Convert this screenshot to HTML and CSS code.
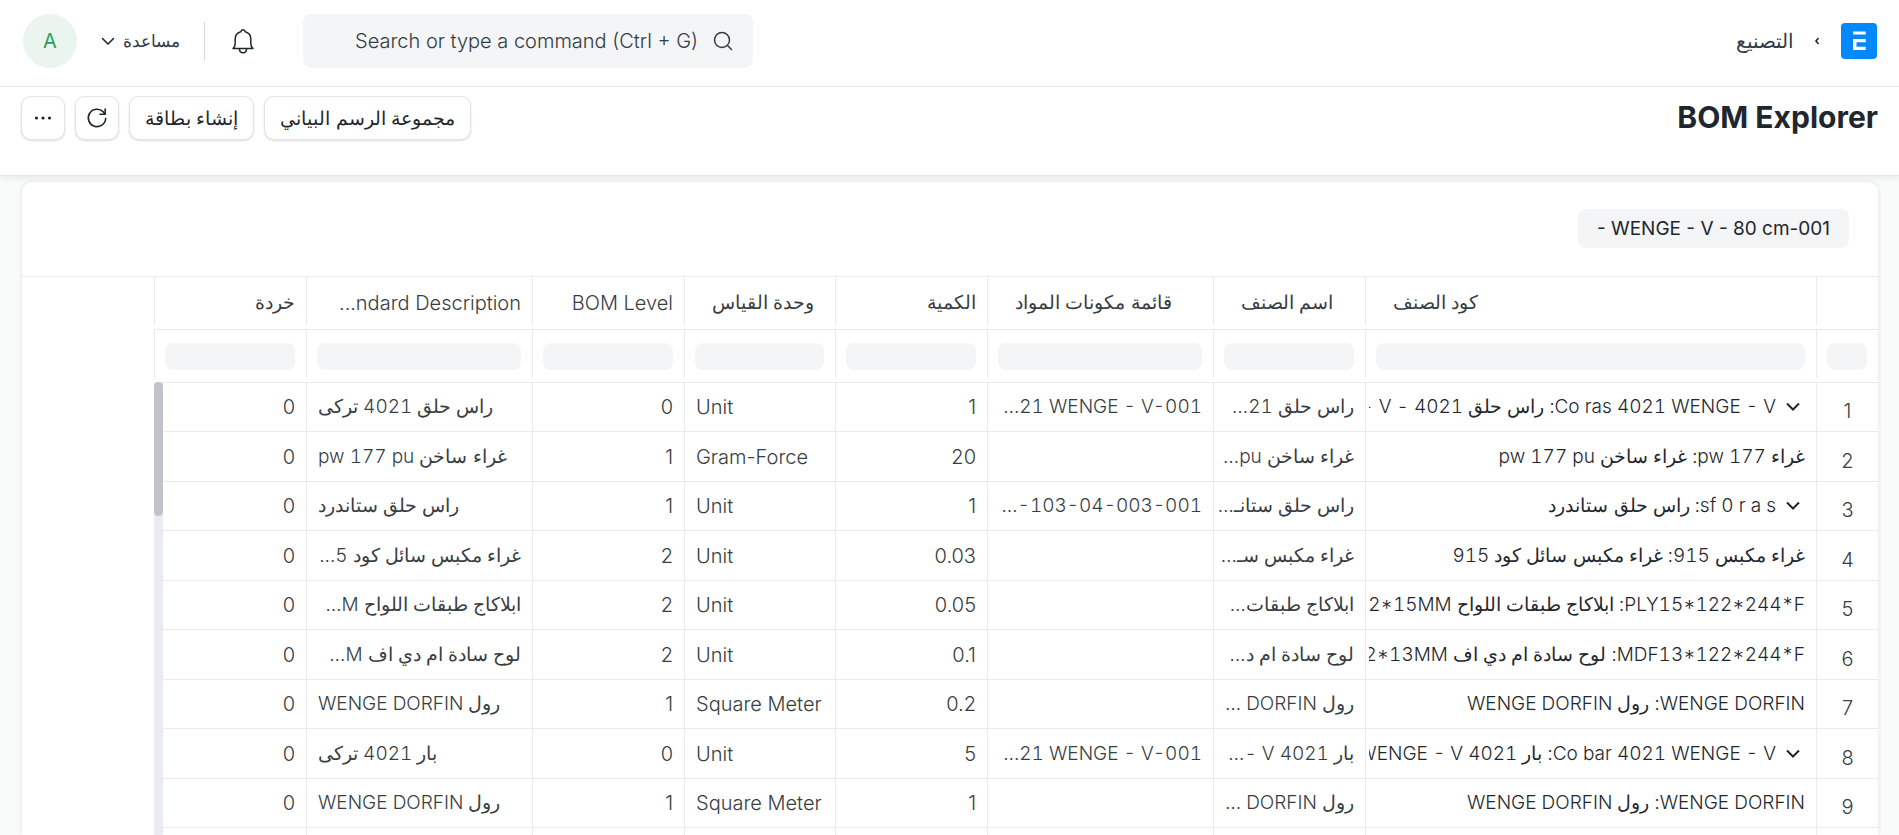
FILE: index.html
```html
<!DOCTYPE html>
<html lang="ar" dir="rtl">
    <head>
        <meta charset="UTF-8" />
        <meta name="viewport" content="width=device-width, initial-scale=1.0" />
        <title>BOM Explorer</title>
        <link rel="stylesheet" href="styles.css">
    </head>
    <body>
        <header class="navbar">
            <a class="logo" href="#" aria-label="Home">
                <svg width="36" height="36" viewBox="0 0 36 36">
                    <rect width="36" height="36" rx="4" fill="#0089ff"></rect>
                    <path d="M12 8.500h12.700v3H12zM12 16h12.700v3.200H15.500v4.600h9.200V27H12z" fill="#fff"></path>
                </svg>
            </a>
            <nav class="breadcrumb">
                <svg width="6" height="10" viewBox="0 0 6 10" fill="none" stroke="#1f272e" stroke-width="1.600">
                    <path d="M4.500 2 2 5l2.500 3"></path>
                </svg>
                <a href="#">التصنيع</a>
            </nav>
            <div class="search">
                <svg width="22" height="22" viewBox="0 0 22 22" fill="none" stroke="#333c44" stroke-width="1.500" stroke-linecap="round">
                    <circle cx="10" cy="10" r="7.500"></circle>
                    <path d="m15.500 15.500 4 4"></path>
                </svg>
                <input type="text" dir="ltr" aria-label="Search" placeholder="Search or type a command (Ctrl + G)" />
            </div>
            <button class="bell" aria-label="Notifications">
                <svg width="24" height="26" viewBox="0 0 24 26" fill="none" stroke="#1f272e" stroke-width="1.500" stroke-linejoin="round" stroke-linecap="round">
                    <path d="M2 20.500h20c-1.600-1.500-2.200-2.500-2.200-5V11c0-4-2.300-6.300-5.500-7.200C14 2.400 13.200 1.700 12 1.700s-2 .7-2.300 2.100C6.500 4.700 4.200 7 4.200 11v4.500c0 2.500-.6 3.500-2.200 5z"></path>
                    <path d="M8.500 21c0 2.200 1.400 3.700 3.500 3.700s3.500-1.500 3.500-3.700"></path>
                </svg>
            </button>
            <span class="divider"></span>
            <button class="help">
                مساعدة
                <svg width="14" height="9" viewBox="0 0 14 9" fill="none" stroke="#1f272e" stroke-width="1.600" stroke-linecap="round" stroke-linejoin="round">
                    <path d="m1.500 1.500 5.500 5.500 5.500-5.500"></path>
                </svg>
            </button>
            <button class="avatar">A</button>
        </header>

        <section class="page-head">
            <h1 dir="ltr">BOM Explorer</h1>
            <div class="actions">
                <button class="btn">مجموعة الرسم البياني</button>
                <button class="btn">إنشاء بطاقة</button>
                <button class="btn btn-icon" aria-label="Refresh">
                    <svg width="22" height="22" viewBox="0 0 22 22" fill="none" stroke="#1f272e" stroke-width="1.600" stroke-linecap="round" stroke-linejoin="round">
                        <path d="M19.700 11.500a8.700 8.700 0 1 1-2.400-6.600l1.400 2"></path>
                        <path d="M19.200 2v5.200h-5.200"></path>
                    </svg>
                </button>
                <button class="btn btn-icon" aria-label="Menu">
                    <svg width="18" height="4" viewBox="0 0 18 4" fill="#1f272e">
                        <circle cx="2.500" cy="2" r="1.600"></circle>
                        <circle cx="9" cy="2" r="1.600"></circle>
                        <circle cx="15.500" cy="2" r="1.600"></circle>
                    </svg>
                </button>
            </div>
        </section>

        <main class="report">
            <div class="filters">
                <button class="filter" dir="ltr">- WENGE - V - 80 cm-001</button>
            </div>
            <div class="datatable">
                <table>
                    <colgroup>
                        <col class="c-num" />
                        <col class="c-code" />
                        <col />
                        <col class="c-wide" />
                        <col />
                        <col class="c-uom" />
                        <col />
                        <col class="c-wide" />
                        <col />
                    </colgroup>
                    <thead>
                        <tr>
                            <th></th>
                            <th class="start">كود الصنف</th>
                            <th class="start">اسم الصنف</th>
                            <th class="start">قائمة مكونات المواد</th>
                            <th>الكمية</th>
                            <th class="start">وحدة القياس</th>
                            <th class="en">BOM Level</th>
                            <th class="en"><bdi dir="ltr">…ndard Description</bdi></th>
                            <th>خردة</th>
                        </tr>
                        <tr>
                            <td><input type="text" aria-label="#" /></td>
                            <td><input type="text" aria-label="كود الصنف" /></td>
                            <td><input type="text" aria-label="اسم الصنف" /></td>
                            <td><input type="text" aria-label="قائمة مكونات المواد" /></td>
                            <td><input type="text" aria-label="الكمية" /></td>
                            <td><input type="text" aria-label="وحدة القياس" /></td>
                            <td><input type="text" aria-label="BOM Level" /></td>
                            <td><input type="text" aria-label="Standard Description" /></td>
                            <td><input type="text" aria-label="خردة" /></td>
                        </tr>
                    </thead>
                    <tbody>
                        <tr>
                            <td class="num">1</td>
                            <td class="code"><div><svg class="toggle" viewBox="0 0 14 9"><path d="m1 1.500 6 6 6-6"></path></svg>Co ras 4021 WENGE - V: راس حلق 4021 - V -</div></td>
                            <td class="name">راس حلق 21…</td>
                            <td class="name"><bdi dir="ltr">…21 WENGE - V-001</bdi></td>
                            <td>1</td>
                            <td class="left">Unit</td>
                            <td>0</td>
                            <td class="name left">راس حلق 4021 تركى</td>
                            <td>0</td>
                        </tr>
                        <tr>
                            <td class="num">2</td>
                            <td class="code"><div>غراء pw 177: غراء ساخن pw 177 pu</div></td>
                            <td class="name">غراء ساخن pu…</td>
                            <td></td>
                            <td>20</td>
                            <td class="left">Gram-Force</td>
                            <td>1</td>
                            <td class="name left">غراء ساخن pw 177 pu</td>
                            <td>0</td>
                        </tr>
                        <tr>
                            <td class="num">3</td>
                            <td class="code"><div><svg class="toggle" viewBox="0 0 14 9"><path d="m1 1.500 6 6 6-6"></path></svg>sf 0 r a s: راس حلق ستاندرد</div></td>
                            <td class="name">راس حلق ستانـ…</td>
                            <td class="name"><bdi dir="ltr">…-103-04-003-001</bdi></td>
                            <td>1</td>
                            <td class="left">Unit</td>
                            <td>1</td>
                            <td class="name left">راس حلق ستاندرد</td>
                            <td>0</td>
                        </tr>
                        <tr>
                            <td class="num">4</td>
                            <td class="code"><div>غراء مكبس 915: غراء مكبس سائل كود 915</div></td>
                            <td class="name">غراء مكبس سـ…</td>
                            <td></td>
                            <td>0.03</td>
                            <td class="left">Unit</td>
                            <td>2</td>
                            <td class="name">غراء مكبس سائل كود 5…</td>
                            <td>0</td>
                        </tr>
                        <tr>
                            <td class="num">5</td>
                            <td class="code"><div><bdi>PLY15*122*244*F</bdi>: ابلاكاج طبقات اللواح <bdi>2*15MM</bdi></div></td>
                            <td class="name">ابلاكاج طبقات…</td>
                            <td></td>
                            <td>0.05</td>
                            <td class="left">Unit</td>
                            <td>2</td>
                            <td class="name">ابلاكاج طبقات اللواح M…</td>
                            <td>0</td>
                        </tr>
                        <tr>
                            <td class="num">6</td>
                            <td class="code"><div><bdi>MDF13*122*244*F</bdi>: لوح سادة ام دي اف <bdi>2*13MM</bdi></div></td>
                            <td class="name">لوح سادة ام د…</td>
                            <td></td>
                            <td>0.1</td>
                            <td class="left">Unit</td>
                            <td>2</td>
                            <td class="name">لوح سادة ام دي اف M…</td>
                            <td>0</td>
                        </tr>
                        <tr>
                            <td class="num">7</td>
                            <td class="code"><div>WENGE DORFIN: رول WENGE DORFIN</div></td>
                            <td class="name">رول DORFIN …</td>
                            <td></td>
                            <td>0.2</td>
                            <td class="left">Square Meter</td>
                            <td>1</td>
                            <td class="name left">رول WENGE DORFIN</td>
                            <td>0</td>
                        </tr>
                        <tr>
                            <td class="num">8</td>
                            <td class="code"><div><svg class="toggle" viewBox="0 0 14 9"><path d="m1 1.500 6 6 6-6"></path></svg>Co bar 4021 WENGE - V: بار 4021 WENGE - V</div></td>
                            <td class="name">بار 4021 V -…</td>
                            <td class="name"><bdi dir="ltr">…21 WENGE - V-001</bdi></td>
                            <td>5</td>
                            <td class="left">Unit</td>
                            <td>0</td>
                            <td class="name left">بار 4021 تركى</td>
                            <td>0</td>
                        </tr>
                        <tr>
                            <td class="num">9</td>
                            <td class="code"><div>WENGE DORFIN: رول WENGE DORFIN</div></td>
                            <td class="name">رول DORFIN …</td>
                            <td></td>
                            <td>1</td>
                            <td class="left">Square Meter</td>
                            <td>1</td>
                            <td class="name left">رول WENGE DORFIN</td>
                            <td>0</td>
                        </tr>
                        <tr>
                            <td></td><td></td><td></td><td></td><td></td><td></td><td></td><td></td><td></td>
                        </tr>
                    </tbody>
                </table>
                <div class="scrollbar"><div class="thumb"></div></div>
            </div>
        </main>
    </body>
</html>
```
FILE: styles.css
```css
*,
*::before,
*::after {
    box-sizing: border-box;
}

body {
    margin: 0;
    height: 100vh;
    overflow: hidden;
    display: flex;
    flex-direction: column;
    background: #f9fafa;
    color: #1f272e;
    font-family: Inter, "Noto Sans", "DejaVu Sans", sans-serif;
    font-size: 20px;
    font-weight: 300;
}

button,
input {
    font: inherit;
    color: inherit;
    border: 0;
    margin: 0;
}

button {
    cursor: pointer;
    background: none;
    padding: 0;
}

a {
    color: inherit;
    text-decoration: none;
}

svg {
    display: block;
    flex: none;
}

.navbar {
    flex: none;
    display: flex;
    align-items: center;
    height: 87px;
    padding: 0 22px 4px 23px;
    background: #fff;
    border-bottom: 1px solid #e8eaec;
}

.breadcrumb {
    display: flex;
    align-items: center;
    gap: 20px;
    margin-right: 21px;
    color: #333c44;
}

.search {
    display: flex;
    align-items: center;
    gap: 14px;
    width: 450px;
    height: 54px;
    margin-right: auto;
    padding: 0 19px;
    background: #f4f5f6;
    border-radius: 8px;
}
.search input {
    flex: 1;
    min-width: 0;
    padding: 0;
    background: none;
    outline: 0;
    text-align: right;
}
.search input::placeholder {
    color: #333c44;
    opacity: 1;
}

.bell {
    margin: 0 48px 0 26px;
}

.divider {
    width: 1px;
    height: 38px;
    background: #d5d9dd;
}

.help {
    display: flex;
    align-items: center;
    gap: 8px;
    margin: 0 24px;
    font-size: 17px;
    color: #333c44;
}

.avatar {
    width: 54px;
    height: 54px;
    border-radius: 50%;
    background: #e9f5ee;
    color: #2f9d58;
    font-weight: 400;
}

.page-head {
    flex: none;
    position: relative;
    display: flex;
    justify-content: space-between;
    height: 89px;
    padding: 9px 21px 0;
    background: #fff;
    border-bottom: 1px solid #e3e6e8;
    box-shadow: 0 2px 6px rgba(25, 39, 52, 0.08);
}

h1 {
    margin: 0;
    font-size: 30px;
    line-height: 42px;
    font-weight: 700;
}

.actions {
    display: flex;
    gap: 10px;
}

.btn {
    height: 44px;
    padding: 0 15px;
    background: #fff;
    border: 1px solid #e2e4e7;
    border-radius: 10px;
    box-shadow: 0 1px 2px rgba(0, 0, 0, 0.14);
    font-size: 19px;
}
.btn-icon {
    display: flex;
    align-items: center;
    justify-content: center;
    width: 44px;
    padding: 0;
}

.report {
    flex: 1;
    min-height: 0;
    overflow: hidden;
    margin: 6px 21px 0 22px;
    background: #fff;
    border-radius: 10px 10px 0 0;
    box-shadow: 0 0 4px rgba(25, 39, 52, 0.12);
}

.filters {
    height: 95px;
    padding: 27px 29px 0;
    border-bottom: 1px solid #e8eaec;
}

.filter {
    height: 39px;
    padding: 0 19px;
    background: #f4f5f6;
    border-radius: 8px;
    font-size: 19px;
    font-weight: 400;
}

.datatable {
    position: relative;
    width: 1724px;
}

table {
    width: 100%;
    table-layout: fixed;
    border-collapse: separate;
    border-spacing: 0;
    color: #383d42;
}

col {
    width: 152px;
}
.c-num {
    width: 62px;
}
.c-code {
    width: 451px;
}
.c-wide {
    width: 226px;
}
.c-uom {
    width: 151px;
}

th,
td {
    height: 49px;
    padding: 0 11px;
    border-bottom: 1px solid #e8eaec;
    border-left: 1px solid #e8eaec;
    font-weight: 300;
    line-height: 24px;
    text-align: right;
    white-space: nowrap;
    overflow: hidden;
}

/* header separators stop short of the bottom rule */
thead th,
thead td {
    height: 53px;
    border-left: 0;
    background: linear-gradient(#e8eaec, #e8eaec) left top / 1px calc(100% - 4px) no-repeat;
    font-size: 19px;
}
thead .en {
    font-size: 20px;
}
thead .start {
    direction: ltr;
    text-align: left;
    padding-left: 28px;
}
thead input {
    display: block;
    width: 100%;
    height: 27px;
    background: #f4f5f6;
    border-radius: 8px;
}

tbody tr:nth-child(even) td {
    height: 50px;
}
tbody .name,
tbody .code {
    font-size: 19px;
    font-variant-numeric: tabular-nums;
}
tbody .left {
    text-align: left;
}
tbody .num {
    padding-top: 8px;
    text-align: center;
}
tbody .code {
    padding-left: 3px;
}
.code div {
    display: flow-root;
    overflow: hidden;
    color: #1f272e;
}

.toggle {
    display: inline-block;
    width: 14px;
    height: 9px;
    margin: 0 5px 2px 10px;
    fill: none;
    stroke: #1f272e;
    stroke-width: 2;
}

.scrollbar {
    position: absolute;
    left: 0;
    top: 105px;
    bottom: 0;
    width: 9px;
    background: #e9edf1;
}
.thumb {
    height: 134px;
    background: #c0c4c8;
    border-radius: 5px;
}
```
